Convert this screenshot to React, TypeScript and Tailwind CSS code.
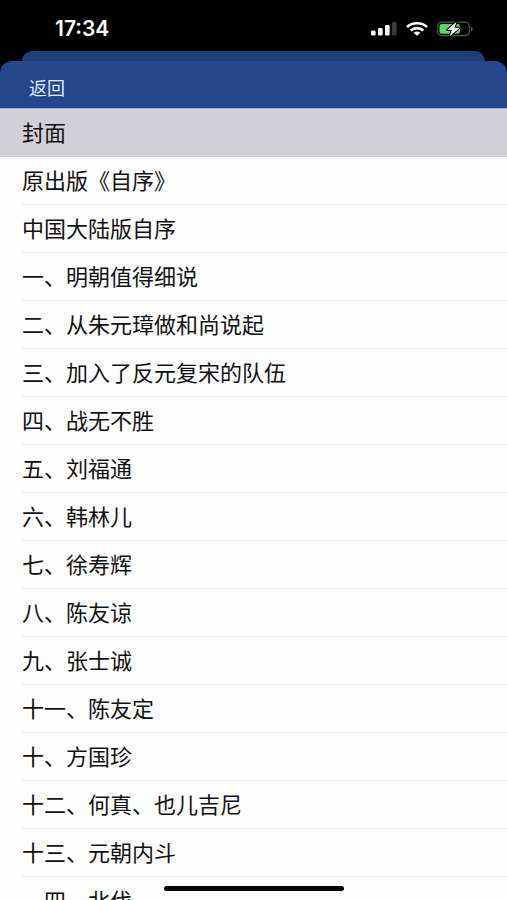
const chapters: string[] = [
  '封面',
  '原出版《自序》',
  '中国大陆版自序',
  '一、明朝值得细说',
  '二、从朱元璋做和尚说起',
  '三、加入了反元复宋的队伍',
  '四、战无不胜',
  '五、刘福通',
  '六、韩林儿',
  '七、徐寿辉',
  '八、陈友谅',
  '九、张士诚',
  '十一、陈友定',
  '十、方国珍',
  '十二、何真、也儿吉尼',
  '十三、元朝内斗',
  '一四、北伐',
];

function SignalIcon() {
  return (
    <svg width="26" height="14" viewBox="0 0 26 14" aria-hidden="true">
      <rect x="0" y="8.5" width="4.6" height="5" rx="1.3" fill="#fff" />
      <rect x="7" y="6" width="4.6" height="7.5" rx="1.3" fill="#fff" />
      <rect x="14" y="3" width="4.6" height="10.5" rx="1.3" fill="#fff" />
      <rect x="21" y="0" width="4.6" height="13.5" rx="1.3" fill="#3b3b3b" />
    </svg>
  );
}

function WifiIcon() {
  return (
    <svg width="22" height="14" viewBox="0 0 22 14" aria-hidden="true">
      <g fill="none" stroke="#fff" strokeWidth="2.6">
        <path d="M1 4.9C6.5 .1 15.5 .1 21 4.9" />
        <path d="M4.6 8.5C8.2 5.3 13.8 5.3 17.4 8.5" />
      </g>
      <path d="M7.6 10.7C9.5 9 12.5 9 14.4 10.7L11 13.8Z" fill="#fff" />
    </svg>
  );
}

function BatteryIcon() {
  return (
    <svg width="36" height="16" viewBox="0 0 36 16" aria-hidden="true">
      <rect x="0.7" y="1.2" width="31.6" height="13.4" rx="4" fill="none" stroke="#565656" strokeWidth="1.2" />
      <path d="M34 5.6C36.2 6.2 36.2 9.6 34 10.2Z" fill="#565656" />
      <rect x="2.5" y="3" width="20.5" height="9.8" rx="2.2" fill="#5fd364" />
      <path
        d="M19.6 .8L10 8.900H14.900L12.600 15.200L22.800 6.800H17.500Z"
        fill="#fff"
        stroke="#000"
        strokeWidth="2"
        strokeLinejoin="round"
        paintOrder="stroke"
      />
    </svg>
  );
}

function StatusBar() {
  return (
    <div className="flex h-[51px] shrink-0 items-center justify-between pt-1.5 pr-[34px] pl-[55px] text-white">
      <time className="font-['Inter',sans-serif] text-[21px] font-semibold">17:34</time>
      <div className="flex items-center gap-[9px]">
        <SignalIcon />
        <WifiIcon />
        <BatteryIcon />
      </div>
    </div>
  );
}

export default function App() {
  return (
    <div
      lang="zh-CN"
      className="relative flex h-screen flex-col overflow-hidden bg-black font-['Noto_Sans_CJK_SC',sans-serif]"
    >
      <StatusBar />
      <div className="mx-[22px] h-2.5 shrink-0 rounded-t-[10px] bg-[#1f3d78]" />
      <main className="flex min-h-0 flex-1 flex-col overflow-hidden rounded-t-[12px] bg-[#24468c]">
        <header className="flex h-12 shrink-0 items-center border-b border-[#9fabc9] px-[29px] pt-1">
          <button type="button" className="text-lg leading-6 text-[#dfe7f8]">
            返回
          </button>
        </header>
        <ul className="min-h-0 flex-1 overflow-hidden bg-[#fdfdfd] text-[22px] leading-8 text-[#111]">
          {chapters.map((title, index) => (
            <li key={title} className={index === 0 ? 'bg-[#d1d0d6] pl-[22px]' : 'pl-[22px]'}>
              <button
                type="button"
                className={
                  index === 0
                    ? 'flex h-12 w-full items-center border-b border-[#d1d0d6] pb-[3px] text-left'
                    : 'flex h-12 w-full items-center border-b border-[#e9e9ea] pb-[3px] text-left'
                }
              >
                {title}
              </button>
            </li>
          ))}
        </ul>
      </main>
      <div className="absolute bottom-[9px] left-1/2 h-[5px] w-[180px] -translate-x-1/2 rounded-full bg-black" />
    </div>
  );
}
